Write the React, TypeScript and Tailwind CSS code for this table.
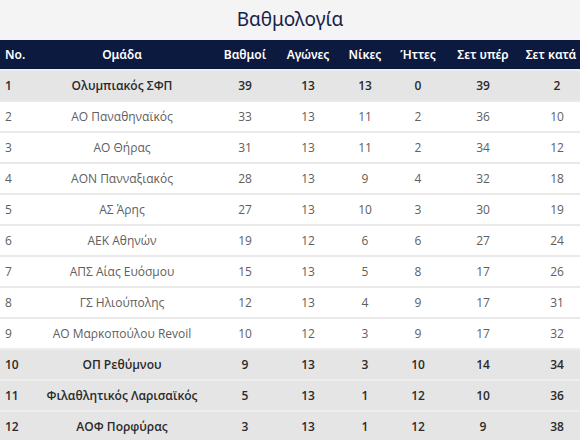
import React from 'react';

interface Row {
  pos: number;
  team: string;
  pts: number;
  played: number;
  won: number;
  lost: number;
  setsFor: number;
  setsAgainst: number;
  highlight?: boolean;
}

const rows: Row[] = [
  { pos: 1, team: 'Ολυμπιακός ΣΦΠ', pts: 39, played: 13, won: 13, lost: 0, setsFor: 39, setsAgainst: 2, highlight: true },
  { pos: 2, team: 'ΑΟ Παναθηναϊκός', pts: 33, played: 13, won: 11, lost: 2, setsFor: 36, setsAgainst: 10 },
  { pos: 3, team: 'ΑΟ Θήρας', pts: 31, played: 13, won: 11, lost: 2, setsFor: 34, setsAgainst: 12 },
  { pos: 4, team: 'ΑΟΝ Πανναξιακός', pts: 28, played: 13, won: 9, lost: 4, setsFor: 32, setsAgainst: 18 },
  { pos: 5, team: 'ΑΣ Άρης', pts: 27, played: 13, won: 10, lost: 3, setsFor: 30, setsAgainst: 19 },
  { pos: 6, team: 'ΑΕΚ Αθηνών', pts: 19, played: 12, won: 6, lost: 6, setsFor: 27, setsAgainst: 24 },
  { pos: 7, team: 'ΑΠΣ Αίας Ευόσμου', pts: 15, played: 13, won: 5, lost: 8, setsFor: 17, setsAgainst: 26 },
  { pos: 8, team: 'ΓΣ Ηλιούπολης', pts: 12, played: 13, won: 4, lost: 9, setsFor: 17, setsAgainst: 31 },
  { pos: 9, team: 'ΑΟ Μαρκοπούλου Revoil', pts: 10, played: 12, won: 3, lost: 9, setsFor: 17, setsAgainst: 32 },
  { pos: 10, team: 'ΟΠ Ρεθύμνου', pts: 9, played: 13, won: 3, lost: 10, setsFor: 14, setsAgainst: 34, highlight: true },
  { pos: 11, team: 'Φιλαθλητικός Λαρισαϊκός', pts: 5, played: 13, won: 1, lost: 12, setsFor: 10, setsAgainst: 36, highlight: true },
  { pos: 12, team: 'ΑΟΦ Πορφύρας', pts: 3, played: 13, won: 1, lost: 12, setsFor: 9, setsAgainst: 38, highlight: true },
];

const headers = ['Ομάδα', 'Βαθμοί', 'Αγώνες', 'Νίκες', 'Ήττες', 'Σετ υπέρ', 'Σετ κατά'];

export default function App() {
  return (
    <div className="w-[580px] h-[440px] overflow-hidden bg-[#f4f4f4] font-['Open_Sans',sans-serif]">
      <h1 className="h-10 flex items-center justify-center text-[19px] text-[#16224a] font-['Noto_Sans',sans-serif] pb-[2px]">
        Βαθμολογία
      </h1>
      <table className="w-[592px] table-fixed border-collapse text-[12px]">
        <colgroup>
          <col className="w-[32px]" />
          <col className="w-[180px]" />
          <col className="w-[66px]" />
          <col className="w-[60px]" />
          <col className="w-[54px]" />
          <col className="w-[52px]" />
          <col className="w-[78px]" />
          <col className="w-[70px]" />
        </colgroup>
        <thead>
          <tr className="h-[30px] bg-[#0d1a3f] text-white font-['Noto_Sans',sans-serif]">
            <th className="text-left pl-[5px] font-semibold">No.</th>
            {headers.map((h, i) => (
              <th key={h} className={i === 6 ? 'text-center font-semibold pr-3' : 'text-center font-semibold'}>
                {h}
              </th>
            ))}
          </tr>
        </thead>
        <tbody>
          {rows.map(r => (
            <tr
              key={r.pos}
              className={
                r.highlight
                  ? 'h-[31px] bg-[#e5e5e5] text-[#2a2a2a] font-semibold border-t-2 border-[#eeeeee]'
                  : 'h-[31px] bg-white text-[#606060] border-t-2 border-[#e9e9e9]'
              }
            >
              <td className="text-left pl-[5px]">{r.pos}</td>
              <td className="text-center whitespace-nowrap">{r.team}</td>
              <td className="text-center">{r.pts}</td>
              <td className="text-center">{r.played}</td>
              <td className="text-center">{r.won}</td>
              <td className="text-center">{r.lost}</td>
              <td className="text-center">{r.setsFor}</td>
              <td className="text-center">{r.setsAgainst}</td>
            </tr>
          ))}
        </tbody>
      </table>
    </div>
  );
}
